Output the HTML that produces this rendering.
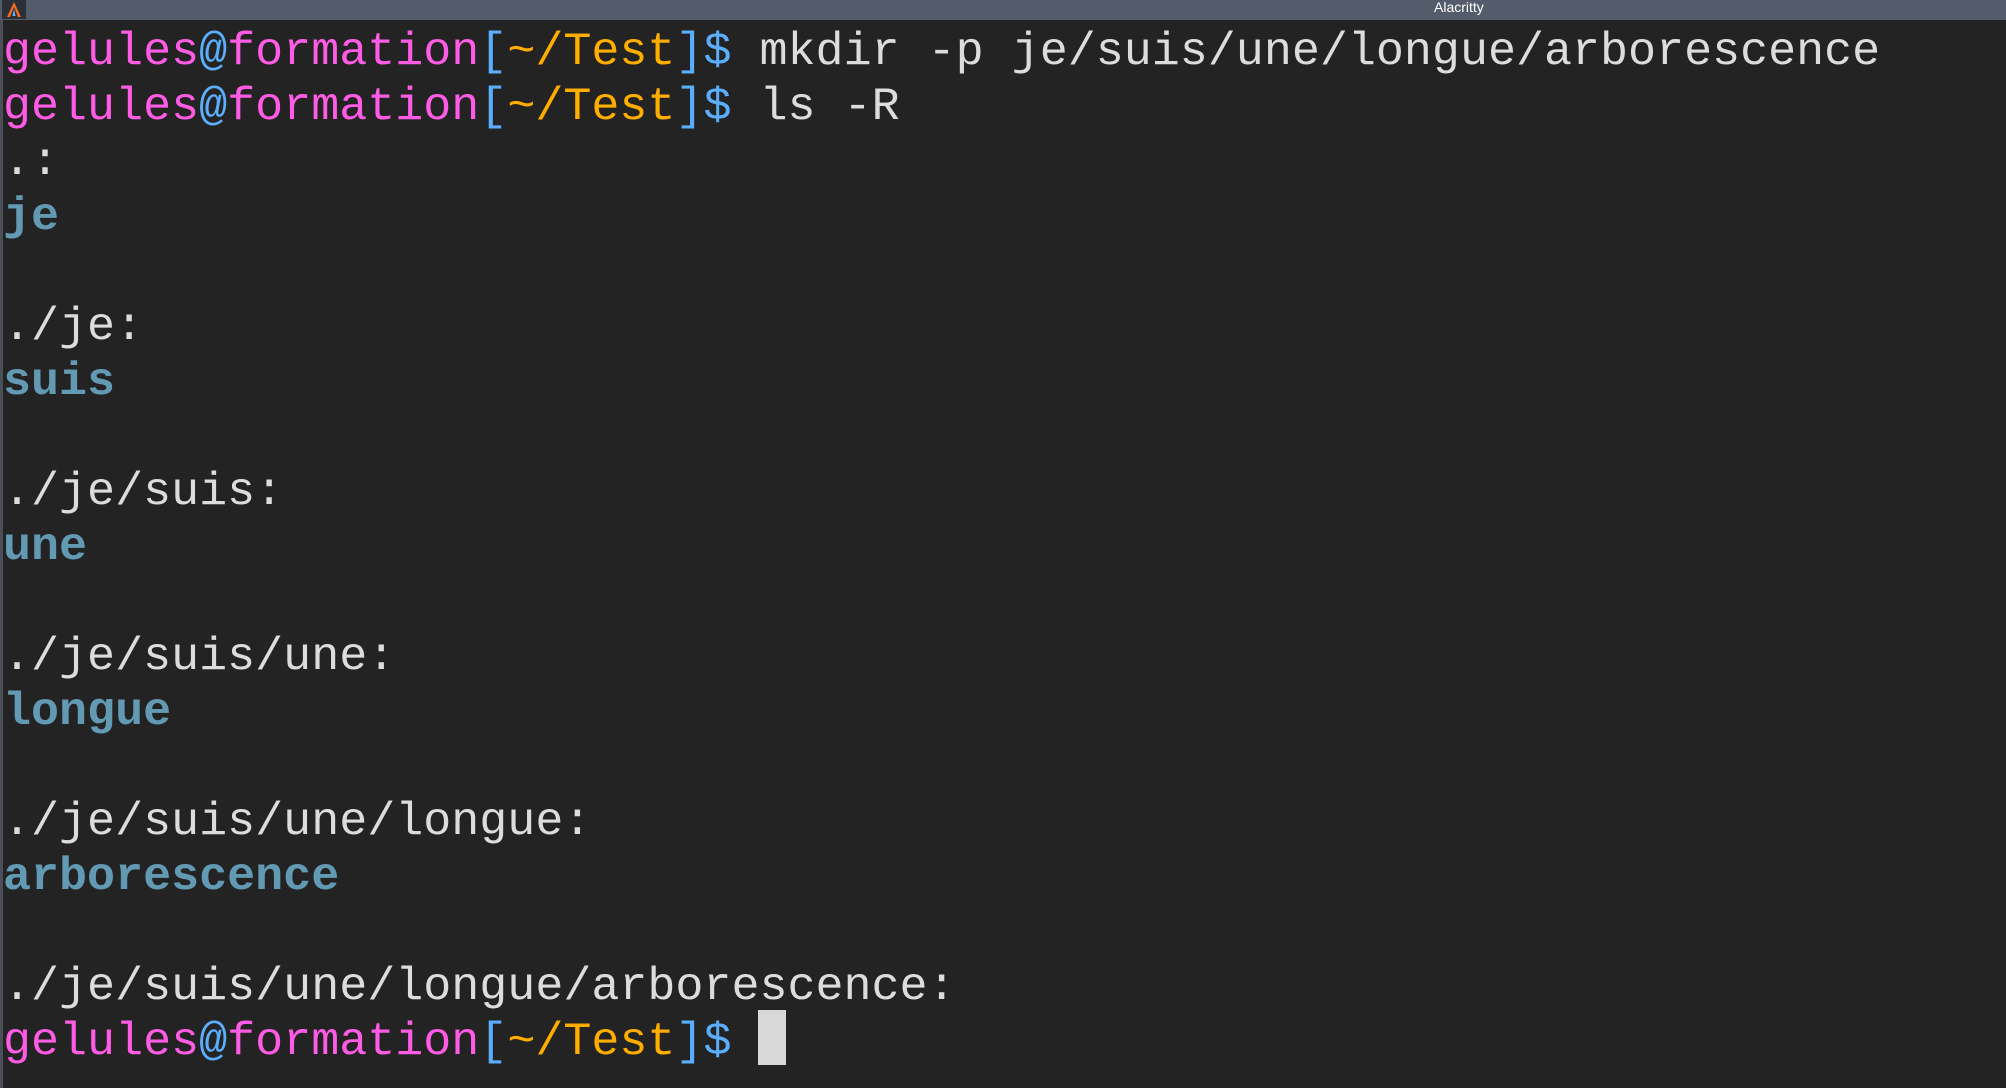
<!DOCTYPE html>
<html><head><meta charset="utf-8"><style>
html,body{margin:0;padding:0;width:2006px;height:1088px;overflow:hidden;background:#232323;}
#bar{position:absolute;left:0;top:0;width:2006px;height:20px;background:#545c6b;}
#bar .t{position:absolute;left:1434px;top:0;font:14px "Liberation Sans",sans-serif;color:#fff;line-height:15px;}
#icon{position:absolute;left:2px;top:0;width:24px;height:19px;background:#2a2f38;}
#lb{position:absolute;left:0;top:20px;width:3px;height:1068px;background:#4a4f58;}
#term{position:absolute;left:3px;top:25px;font-family:"Liberation Mono",monospace;font-size:46.7px;line-height:55px;color:#dcdcdc;white-space:pre;}
.p{color:#ff5ce6}.b{color:#5aaefc}.o{color:#ffae00}.d{color:#6299b3;font-weight:bold}
#cur{position:absolute;left:758px;top:1010px;width:28px;height:55px;background:#d8d8d8;}
</style></head><body>
<div id="bar"><div id="icon"><svg width="24" height="19" viewBox="0 0 24 19"><path d="M12 2 L5 17 L8 17 L12 7 L16 17 L19 17 Z" fill="#f36b1c"/><path d="M12 9 L10.5 16 L13.5 16 Z" fill="#6bb7ff"/></svg></div><span class="t">Alacritty</span></div>
<div id="lb"></div>
<div id="term"><span class="p">gelules</span><span class="b">@</span><span class="p">formation</span><span class="b">[</span><span class="o">~/Test</span><span class="b">]$</span> mkdir -p je/suis/une/longue/arborescence
<span class="p">gelules</span><span class="b">@</span><span class="p">formation</span><span class="b">[</span><span class="o">~/Test</span><span class="b">]$</span> ls -R
.:
<span class="d">je</span>

./je:
<span class="d">suis</span>

./je/suis:
<span class="d">une</span>

./je/suis/une:
<span class="d">longue</span>

./je/suis/une/longue:
<span class="d">arborescence</span>

./je/suis/une/longue/arborescence:
<span class="p">gelules</span><span class="b">@</span><span class="p">formation</span><span class="b">[</span><span class="o">~/Test</span><span class="b">]$</span> </div>
<div id="cur"></div>
</body></html>
